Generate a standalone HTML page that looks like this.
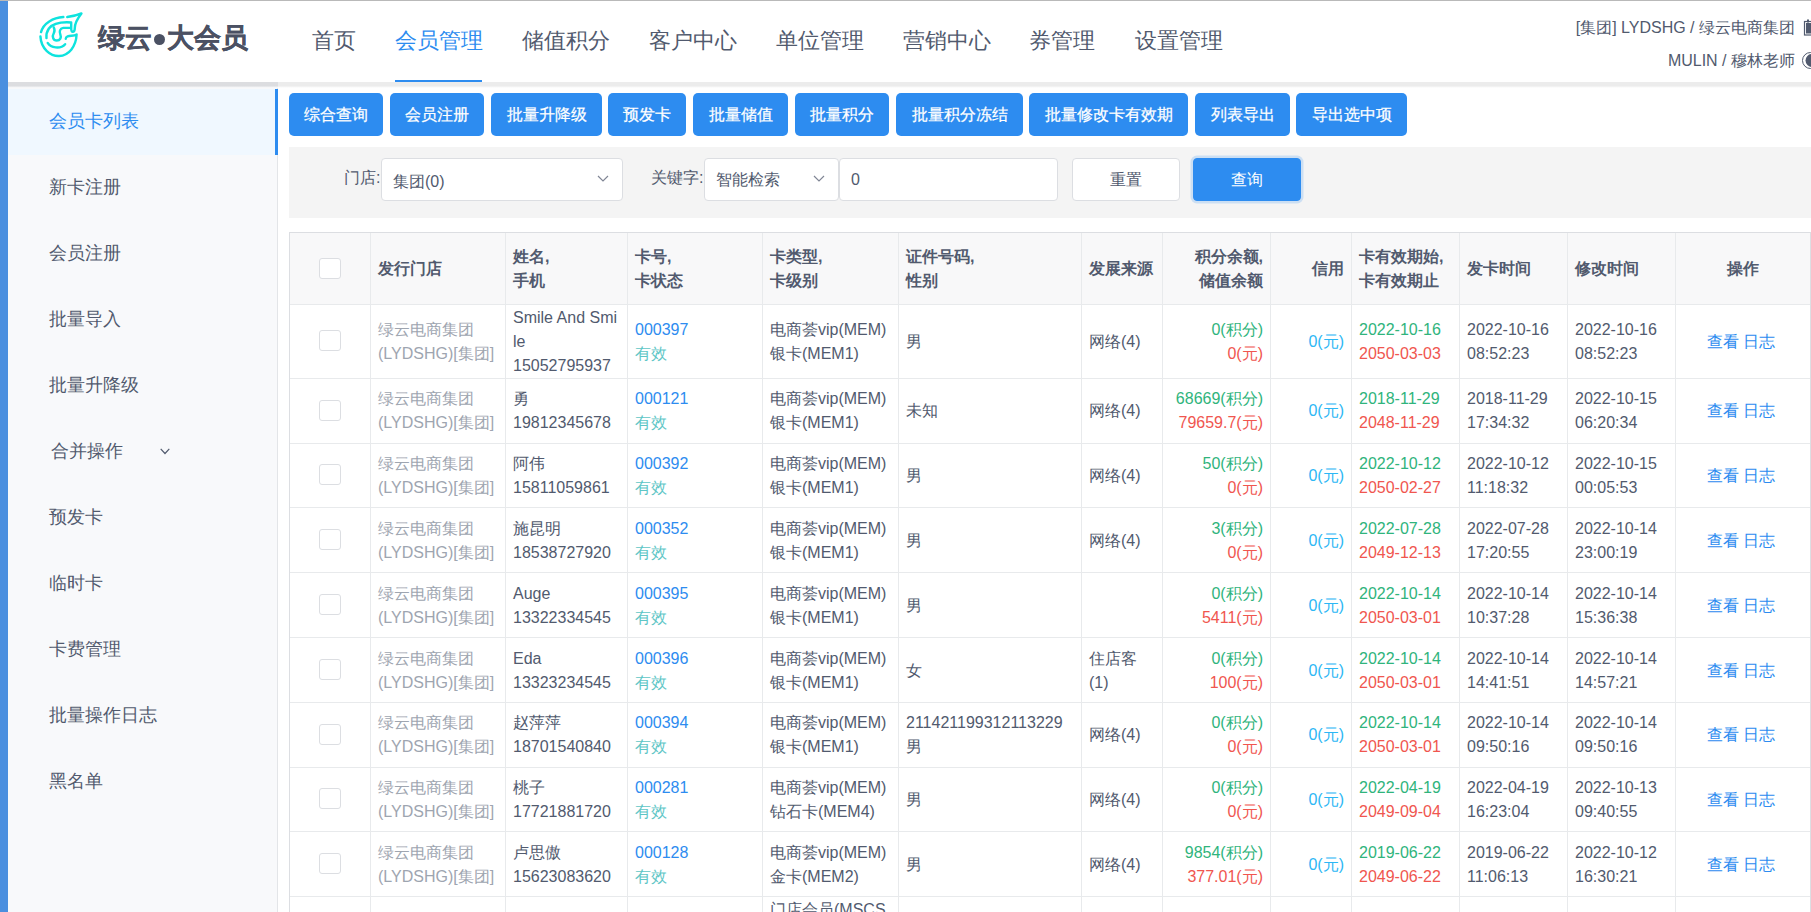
<!DOCTYPE html>
<html><head><meta charset="utf-8">
<style>
*{box-sizing:border-box}
html,body{margin:0;padding:0}
body{width:1811px;height:912px;overflow:hidden;position:relative;background:#fff;font-family:"Liberation Sans",sans-serif;color:#515a6e;font-size:16px}
.abs{position:absolute}
#topline{left:0;top:0;width:1811px;height:1px;background:#b9b9b9}
#lbar{left:0;top:1px;width:8px;height:911px;background:#4a8fdf}
#hshadow{left:8px;top:82px;width:1803px;height:6px;background:linear-gradient(#ececec 0,#ececec 4px,#f8f8f8 5px,#fff 6px);z-index:2}
#hshadow2{left:8px;top:82px;width:270px;height:6px;background:linear-gradient(#dcdde0 0,#dcdde0 4px,#f1f2f4 5px,#fbfbfc 6px);z-index:3}
#side{left:8px;top:86px;width:270px;height:826px;background:#f8f9fb;border-right:1px solid #e3e5e8}
.mi{position:absolute;left:0;width:269px;height:66px;line-height:64px;padding-left:41px;font-size:18px;color:#515a6e}
.mi b{font-weight:normal}
.mi.act{background:#f0f8ff;color:#2d8cf0}
.mi.act:after{content:"";position:absolute;right:-1px;top:0;width:3px;height:66px;background:#2d8cf0}
.nav{position:absolute;top:25px;font-size:22px;line-height:32px;color:#515a6e;white-space:nowrap}
.nav.act{color:#2d8cf0}
#navline{left:395px;top:80px;width:87px;height:2px;background:#2d8cf0}
.btn{position:absolute;top:93px;height:43px;line-height:44px;-webkit-text-stroke:0.25px #fff;background:#2d8cf0;color:#fff;border-radius:5px;text-align:center;font-size:16px;white-space:nowrap}
#filter{left:289px;top:147px;width:1522px;height:71px;background:#f4f4f4}
.lbl{position:absolute;top:166px;font-size:16px;line-height:24px;color:#515a6e;white-space:nowrap}
.sel{position:absolute;top:158px;height:43px;background:#fff;border:1px solid #dcdee2;border-radius:4px;font-size:16px;line-height:41px;color:#515a6e;white-space:nowrap}
.chev{position:absolute;top:16px;width:12px;height:7px}
.c{position:absolute;display:flex;align-items:center;padding:0 7px 0 7px;line-height:24px;font-size:16px;color:#515a6e;white-space:nowrap;overflow:hidden}
.ln{position:absolute}
i.cb{display:block;width:22px;height:21px;border:1px solid #dcdee2;border-radius:3px;background:#fff}
#logo{left:35px;top:8px;width:55px;height:55px}
.logot{top:20px;font-size:27px;line-height:36px;font-weight:bold;color:#4b5163;white-space:nowrap;-webkit-text-stroke:0.3px #4b5163}
.rinfo{position:absolute;right:16px;font-size:16px;line-height:20px;color:#515a6e;white-space:nowrap}
</style></head><body>
<div class="abs" id="topline"></div>
<div class="abs" id="lbar"></div>
<svg class="abs" id="logo" viewBox="0 0 912 912" fill="none" stroke="#0ee3de" stroke-width="40" stroke-linecap="round" stroke-linejoin="round">
<path d="M470,150 C300,160 140,250 100,400"/>
<path d="M90,470 C100,680 260,800 400,795 C560,790 680,640 690,440 C640,470 590,450 540,470 C515,480 510,500 510,510"/>
<path d="M535,150 C620,140 700,120 770,90 C700,180 660,260 660,330 C660,380 640,395 625,395 C600,395 600,360 600,330 L600,240 C450,230 300,250 230,340 C190,400 185,460 190,500"/>
<path d="M310,320 C330,360 330,390 310,420 C280,470 300,540 360,540 C420,540 440,490 420,440 C400,390 410,340 470,330 L590,330"/>
<path d="M210,580 C260,660 420,690 500,600"/>
</svg>
<div class="abs logot" style="left:98px">绿云</div><div class="abs" style="left:153.5px;top:33.8px;width:11.3px;height:11.3px;border-radius:50%;background:#4b5163"></div><div class="abs logot" style="left:167px">大会员</div>
<div class="nav" style="left:312px">首页</div>
<div class="nav act" style="left:395px">会员管理</div>
<div class="nav" style="left:522px">储值积分</div>
<div class="nav" style="left:649px">客户中心</div>
<div class="nav" style="left:776px">单位管理</div>
<div class="nav" style="left:903px">营销中心</div>
<div class="nav" style="left:1029px">券管理</div>
<div class="nav" style="left:1135px">设置管理</div>
<div class="abs" id="navline"></div>
<div class="rinfo" style="top:18px">[集团] LYDSHG / 绿云电商集团</div>
<div class="rinfo" style="top:51px">MULIN / 穆林老师</div>
<svg class="abs" style="left:1803px;top:19px;width:14px;height:17px" viewBox="0 0 14 17"><rect x="1.5" y="2.5" width="14" height="13.5" fill="none" stroke="#515a6e" stroke-width="1.2"/><rect x="3" y="4" width="12" height="10.5" fill="#515a6e"/><rect x="4" y="0.5" width="2" height="3" fill="#515a6e"/></svg>
<svg class="abs" style="left:1802px;top:52px;width:17px;height:17px" viewBox="0 0 17 17"><circle cx="8.5" cy="8.5" r="8" fill="none" stroke="#515a6e" stroke-width="1"/><circle cx="10" cy="8.5" r="6.5" fill="#515a6e"/></svg>
<div class="abs" id="hshadow"></div>
<div class="abs" id="hshadow2"></div>
<div class="abs" id="side">
  <div class="mi act" style="top:3px"><b>会员卡列表</b></div>
  <div class="mi" style="top:69px"><b>新卡注册</b></div>
  <div class="mi" style="top:135px"><b>会员注册</b></div>
  <div class="mi" style="top:201px"><b>批量导入</b></div>
  <div class="mi" style="top:267px"><b>批量升降级</b></div>
  <div class="mi" style="top:333px;padding-left:43px"><b>合并操作</b><svg style="position:absolute;left:152px;top:29px;width:10px;height:7px" viewBox="0 0 10 7"><path d="M0.7,0.9 L5,5.5 L9.3,0.9" fill="none" stroke="#515a6e" stroke-width="1.2"/></svg></div>
  <div class="mi" style="top:399px"><b>预发卡</b></div>
  <div class="mi" style="top:465px"><b>临时卡</b></div>
  <div class="mi" style="top:531px"><b>卡费管理</b></div>
  <div class="mi" style="top:597px"><b>批量操作日志</b></div>
  <div class="mi" style="top:663px"><b>黑名单</b></div>
</div>

<div class="btn" style="left:289px;width:94px">综合查询</div>
<div class="btn" style="left:390px;width:94px">会员注册</div>
<div class="btn" style="left:491px;width:111px">批量升降级</div>
<div class="btn" style="left:608px;width:78px">预发卡</div>
<div class="btn" style="left:693px;width:95px">批量储值</div>
<div class="btn" style="left:795px;width:94px">批量积分</div>
<div class="btn" style="left:896px;width:127px">批量积分冻结</div>
<div class="btn" style="left:1029px;width:159px">批量修改卡有效期</div>
<div class="btn" style="left:1195px;width:95px">列表导出</div>
<div class="btn" style="left:1296px;width:111px">导出选中项</div>

<div class="abs" id="filter"></div>
<div class="lbl" style="left:344px">门店:</div>
<div class="sel" style="left:381px;width:242px;padding-left:11px"><span style="position:relative;top:2px">集团(0)</span><svg class="chev" style="left:215px" viewBox="0 0 12 7"><path d="M1,1 L6,6 L11,1" fill="none" stroke="#808695" stroke-width="1.2"/></svg></div>
<div class="lbl" style="left:651px">关键字:</div>
<div class="sel" style="left:704px;width:135px;padding-left:11px">智能检索<svg class="chev" style="left:108px" viewBox="0 0 12 7"><path d="M1,1 L6,6 L11,1" fill="none" stroke="#808695" stroke-width="1.2"/></svg></div>
<div class="sel" style="left:839px;width:219px;padding-left:11px">0</div>
<div class="sel" style="left:1072px;width:108px;text-align:center">重置</div>
<div class="sel" style="left:1193px;width:108px;text-align:center;background:#2d8cf0;border-color:#2d8cf0;color:#fff;box-shadow:0 0 0 2.5px rgba(45,140,240,.2)">查询</div>

<div class="ln" style="left:289px;top:304px;width:1522px;height:608px;background:#fff"></div>
<div class="ln" style="left:289px;top:232px;width:1522px;height:72px;background:#f8f8f9"></div>
<div class="ln" style="left:370px;top:232px;width:1px;height:680px;background:#e8eaec"></div>
<div class="ln" style="left:505px;top:232px;width:1px;height:680px;background:#e8eaec"></div>
<div class="ln" style="left:627px;top:232px;width:1px;height:680px;background:#e8eaec"></div>
<div class="ln" style="left:762px;top:232px;width:1px;height:680px;background:#e8eaec"></div>
<div class="ln" style="left:898px;top:232px;width:1px;height:680px;background:#e8eaec"></div>
<div class="ln" style="left:1081px;top:232px;width:1px;height:680px;background:#e8eaec"></div>
<div class="ln" style="left:1162px;top:232px;width:1px;height:680px;background:#e8eaec"></div>
<div class="ln" style="left:1270px;top:232px;width:1px;height:680px;background:#e8eaec"></div>
<div class="ln" style="left:1351px;top:232px;width:1px;height:680px;background:#e8eaec"></div>
<div class="ln" style="left:1459px;top:232px;width:1px;height:680px;background:#e8eaec"></div>
<div class="ln" style="left:1567px;top:232px;width:1px;height:680px;background:#e8eaec"></div>
<div class="ln" style="left:1675px;top:232px;width:1px;height:680px;background:#e8eaec"></div>
<div class="ln" style="left:289px;top:304px;width:1522px;height:1px;background:#e8eaec"></div>
<div class="ln" style="left:289px;top:378px;width:1522px;height:1px;background:#e8eaec"></div>
<div class="ln" style="left:289px;top:443px;width:1522px;height:1px;background:#e8eaec"></div>
<div class="ln" style="left:289px;top:507px;width:1522px;height:1px;background:#e8eaec"></div>
<div class="ln" style="left:289px;top:572px;width:1522px;height:1px;background:#e8eaec"></div>
<div class="ln" style="left:289px;top:637px;width:1522px;height:1px;background:#e8eaec"></div>
<div class="ln" style="left:289px;top:702px;width:1522px;height:1px;background:#e8eaec"></div>
<div class="ln" style="left:289px;top:767px;width:1522px;height:1px;background:#e8eaec"></div>
<div class="ln" style="left:289px;top:831px;width:1522px;height:1px;background:#e8eaec"></div>
<div class="ln" style="left:289px;top:896px;width:1522px;height:1px;background:#e8eaec"></div>
<div class="ln" style="left:289px;top:232px;width:1522px;height:1px;background:#dcdee2"></div>
<div class="ln" style="left:289px;top:232px;width:1px;height:680px;background:#dcdee2"></div>
<div class="ln" style="left:1810px;top:232px;width:1px;height:680px;background:#dcdee2"></div>
<div class="c" style="left:290px;top:233px;width:80px;height:71px;justify-content:center;text-align:center;font-weight:bold"><div><i class="cb"></i></div></div>
<div class="c" style="left:371px;top:233px;width:134px;height:71px;justify-content:flex-start;text-align:left;font-weight:bold"><div>发行门店</div></div>
<div class="c" style="left:506px;top:233px;width:121px;height:71px;justify-content:flex-start;text-align:left;font-weight:bold"><div>姓名,<br>手机</div></div>
<div class="c" style="left:628px;top:233px;width:134px;height:71px;justify-content:flex-start;text-align:left;font-weight:bold"><div>卡号,<br>卡状态</div></div>
<div class="c" style="left:763px;top:233px;width:135px;height:71px;justify-content:flex-start;text-align:left;font-weight:bold"><div>卡类型,<br>卡级别</div></div>
<div class="c" style="left:899px;top:233px;width:182px;height:71px;justify-content:flex-start;text-align:left;font-weight:bold"><div>证件号码,<br>性别</div></div>
<div class="c" style="left:1082px;top:233px;width:80px;height:71px;justify-content:flex-start;text-align:left;font-weight:bold"><div>发展来源</div></div>
<div class="c" style="left:1163px;top:233px;width:107px;height:71px;justify-content:flex-end;text-align:right;font-weight:bold"><div>积分余额,<br>储值余额</div></div>
<div class="c" style="left:1271px;top:233px;width:80px;height:71px;justify-content:flex-end;text-align:right;font-weight:bold"><div>信用</div></div>
<div class="c" style="left:1352px;top:233px;width:107px;height:71px;justify-content:flex-start;text-align:left;font-weight:bold"><div>卡有效期始,<br>卡有效期止</div></div>
<div class="c" style="left:1460px;top:233px;width:107px;height:71px;justify-content:flex-start;text-align:left;font-weight:bold"><div>发卡时间</div></div>
<div class="c" style="left:1568px;top:233px;width:107px;height:71px;justify-content:flex-start;text-align:left;font-weight:bold"><div>修改时间</div></div>
<div class="c" style="left:1676px;top:233px;width:134px;height:71px;justify-content:center;text-align:center;font-weight:bold"><div>操作</div></div>
<div class="c" style="left:290px;top:305px;width:80px;height:73px;justify-content:center;text-align:center"><i class="cb" style="position:relative;top:-1px"></i></div>
<div class="c" style="left:371px;top:305px;width:134px;height:73px;justify-content:flex-start;text-align:left"><div style="color:#9ea5b0">绿云电商集团<br>(LYDSHG)[集团]</div></div>
<div class="c" style="left:506px;top:305px;width:121px;height:73px;justify-content:flex-start;text-align:left"><div>Smile And Smi<br>le<br>15052795937</div></div>
<div class="c" style="left:628px;top:305px;width:134px;height:73px;justify-content:flex-start;text-align:left"><div><span style="color:#2d8cf0">000397</span><br><span style="color:#5ec6c6">有效</span></div></div>
<div class="c" style="left:763px;top:305px;width:135px;height:73px;justify-content:flex-start;text-align:left"><div>电商荟vip(MEM)<br>银卡(MEM1)</div></div>
<div class="c" style="left:899px;top:305px;width:182px;height:73px;justify-content:flex-start;text-align:left"><div>男</div></div>
<div class="c" style="left:1082px;top:305px;width:80px;height:73px;justify-content:flex-start;text-align:left"><div>网络(4)</div></div>
<div class="c" style="left:1163px;top:305px;width:107px;height:73px;justify-content:flex-end;text-align:right"><div><span style="color:#2fb47c">0(积分)</span><br><span style="color:#f0564f">0(元)</span></div></div>
<div class="c" style="left:1271px;top:305px;width:80px;height:73px;justify-content:flex-end;text-align:right"><div style="color:#2db7f5">0(元)</div></div>
<div class="c" style="left:1352px;top:305px;width:107px;height:73px;justify-content:flex-start;text-align:left"><div><span style="color:#2fb47c">2022-10-16</span><br><span style="color:#f0564f">2050-03-03</span></div></div>
<div class="c" style="left:1460px;top:305px;width:107px;height:73px;justify-content:flex-start;text-align:left"><div>2022-10-16<br>08:52:23</div></div>
<div class="c" style="left:1568px;top:305px;width:107px;height:73px;justify-content:flex-start;text-align:left"><div>2022-10-16<br>08:52:23</div></div>
<div class="c" style="left:1676px;top:305px;width:134px;height:73px;justify-content:center;text-align:center"><div style="position:relative;left:-2px;color:#2d8cf0">查看<span style="margin-left:4px">日志</span></div></div>
<div class="c" style="left:290px;top:379px;width:80px;height:64px;justify-content:center;text-align:center"><i class="cb" style="position:relative;top:-1px"></i></div>
<div class="c" style="left:371px;top:379px;width:134px;height:64px;justify-content:flex-start;text-align:left"><div style="color:#9ea5b0">绿云电商集团<br>(LYDSHG)[集团]</div></div>
<div class="c" style="left:506px;top:379px;width:121px;height:64px;justify-content:flex-start;text-align:left"><div>勇<br>19812345678</div></div>
<div class="c" style="left:628px;top:379px;width:134px;height:64px;justify-content:flex-start;text-align:left"><div><span style="color:#2d8cf0">000121</span><br><span style="color:#5ec6c6">有效</span></div></div>
<div class="c" style="left:763px;top:379px;width:135px;height:64px;justify-content:flex-start;text-align:left"><div>电商荟vip(MEM)<br>银卡(MEM1)</div></div>
<div class="c" style="left:899px;top:379px;width:182px;height:64px;justify-content:flex-start;text-align:left"><div>未知</div></div>
<div class="c" style="left:1082px;top:379px;width:80px;height:64px;justify-content:flex-start;text-align:left"><div>网络(4)</div></div>
<div class="c" style="left:1163px;top:379px;width:107px;height:64px;justify-content:flex-end;text-align:right"><div><span style="color:#2fb47c">68669(积分)</span><br><span style="color:#f0564f">79659.7(元)</span></div></div>
<div class="c" style="left:1271px;top:379px;width:80px;height:64px;justify-content:flex-end;text-align:right"><div style="color:#2db7f5">0(元)</div></div>
<div class="c" style="left:1352px;top:379px;width:107px;height:64px;justify-content:flex-start;text-align:left"><div><span style="color:#2fb47c">2018-11-29</span><br><span style="color:#f0564f">2048-11-29</span></div></div>
<div class="c" style="left:1460px;top:379px;width:107px;height:64px;justify-content:flex-start;text-align:left"><div>2018-11-29<br>17:34:32</div></div>
<div class="c" style="left:1568px;top:379px;width:107px;height:64px;justify-content:flex-start;text-align:left"><div>2022-10-15<br>06:20:34</div></div>
<div class="c" style="left:1676px;top:379px;width:134px;height:64px;justify-content:center;text-align:center"><div style="position:relative;left:-2px;color:#2d8cf0">查看<span style="margin-left:4px">日志</span></div></div>
<div class="c" style="left:290px;top:444px;width:80px;height:63px;justify-content:center;text-align:center"><i class="cb" style="position:relative;top:-1px"></i></div>
<div class="c" style="left:371px;top:444px;width:134px;height:63px;justify-content:flex-start;text-align:left"><div style="color:#9ea5b0">绿云电商集团<br>(LYDSHG)[集团]</div></div>
<div class="c" style="left:506px;top:444px;width:121px;height:63px;justify-content:flex-start;text-align:left"><div>阿伟<br>15811059861</div></div>
<div class="c" style="left:628px;top:444px;width:134px;height:63px;justify-content:flex-start;text-align:left"><div><span style="color:#2d8cf0">000392</span><br><span style="color:#5ec6c6">有效</span></div></div>
<div class="c" style="left:763px;top:444px;width:135px;height:63px;justify-content:flex-start;text-align:left"><div>电商荟vip(MEM)<br>银卡(MEM1)</div></div>
<div class="c" style="left:899px;top:444px;width:182px;height:63px;justify-content:flex-start;text-align:left"><div>男</div></div>
<div class="c" style="left:1082px;top:444px;width:80px;height:63px;justify-content:flex-start;text-align:left"><div>网络(4)</div></div>
<div class="c" style="left:1163px;top:444px;width:107px;height:63px;justify-content:flex-end;text-align:right"><div><span style="color:#2fb47c">50(积分)</span><br><span style="color:#f0564f">0(元)</span></div></div>
<div class="c" style="left:1271px;top:444px;width:80px;height:63px;justify-content:flex-end;text-align:right"><div style="color:#2db7f5">0(元)</div></div>
<div class="c" style="left:1352px;top:444px;width:107px;height:63px;justify-content:flex-start;text-align:left"><div><span style="color:#2fb47c">2022-10-12</span><br><span style="color:#f0564f">2050-02-27</span></div></div>
<div class="c" style="left:1460px;top:444px;width:107px;height:63px;justify-content:flex-start;text-align:left"><div>2022-10-12<br>11:18:32</div></div>
<div class="c" style="left:1568px;top:444px;width:107px;height:63px;justify-content:flex-start;text-align:left"><div>2022-10-15<br>00:05:53</div></div>
<div class="c" style="left:1676px;top:444px;width:134px;height:63px;justify-content:center;text-align:center"><div style="position:relative;left:-2px;color:#2d8cf0">查看<span style="margin-left:4px">日志</span></div></div>
<div class="c" style="left:290px;top:508px;width:80px;height:64px;justify-content:center;text-align:center;padding-top:2px"><i class="cb" style="position:relative;top:-2px"></i></div>
<div class="c" style="left:371px;top:508px;width:134px;height:64px;justify-content:flex-start;text-align:left;padding-top:2px"><div style="color:#9ea5b0">绿云电商集团<br>(LYDSHG)[集团]</div></div>
<div class="c" style="left:506px;top:508px;width:121px;height:64px;justify-content:flex-start;text-align:left;padding-top:2px"><div>施昆明<br>18538727920</div></div>
<div class="c" style="left:628px;top:508px;width:134px;height:64px;justify-content:flex-start;text-align:left;padding-top:2px"><div><span style="color:#2d8cf0">000352</span><br><span style="color:#5ec6c6">有效</span></div></div>
<div class="c" style="left:763px;top:508px;width:135px;height:64px;justify-content:flex-start;text-align:left;padding-top:2px"><div>电商荟vip(MEM)<br>银卡(MEM1)</div></div>
<div class="c" style="left:899px;top:508px;width:182px;height:64px;justify-content:flex-start;text-align:left;padding-top:2px"><div>男</div></div>
<div class="c" style="left:1082px;top:508px;width:80px;height:64px;justify-content:flex-start;text-align:left;padding-top:2px"><div>网络(4)</div></div>
<div class="c" style="left:1163px;top:508px;width:107px;height:64px;justify-content:flex-end;text-align:right;padding-top:2px"><div><span style="color:#2fb47c">3(积分)</span><br><span style="color:#f0564f">0(元)</span></div></div>
<div class="c" style="left:1271px;top:508px;width:80px;height:64px;justify-content:flex-end;text-align:right;padding-top:2px"><div style="color:#2db7f5">0(元)</div></div>
<div class="c" style="left:1352px;top:508px;width:107px;height:64px;justify-content:flex-start;text-align:left;padding-top:2px"><div><span style="color:#2fb47c">2022-07-28</span><br><span style="color:#f0564f">2049-12-13</span></div></div>
<div class="c" style="left:1460px;top:508px;width:107px;height:64px;justify-content:flex-start;text-align:left;padding-top:2px"><div>2022-07-28<br>17:20:55</div></div>
<div class="c" style="left:1568px;top:508px;width:107px;height:64px;justify-content:flex-start;text-align:left;padding-top:2px"><div>2022-10-14<br>23:00:19</div></div>
<div class="c" style="left:1676px;top:508px;width:134px;height:64px;justify-content:center;text-align:center;padding-top:2px"><div style="position:relative;left:-2px;color:#2d8cf0">查看<span style="margin-left:4px">日志</span></div></div>
<div class="c" style="left:290px;top:573px;width:80px;height:64px;justify-content:center;text-align:center;padding-top:2px"><i class="cb" style="position:relative;top:-2px"></i></div>
<div class="c" style="left:371px;top:573px;width:134px;height:64px;justify-content:flex-start;text-align:left;padding-top:2px"><div style="color:#9ea5b0">绿云电商集团<br>(LYDSHG)[集团]</div></div>
<div class="c" style="left:506px;top:573px;width:121px;height:64px;justify-content:flex-start;text-align:left;padding-top:2px"><div>Auge<br>13322334545</div></div>
<div class="c" style="left:628px;top:573px;width:134px;height:64px;justify-content:flex-start;text-align:left;padding-top:2px"><div><span style="color:#2d8cf0">000395</span><br><span style="color:#5ec6c6">有效</span></div></div>
<div class="c" style="left:763px;top:573px;width:135px;height:64px;justify-content:flex-start;text-align:left;padding-top:2px"><div>电商荟vip(MEM)<br>银卡(MEM1)</div></div>
<div class="c" style="left:899px;top:573px;width:182px;height:64px;justify-content:flex-start;text-align:left;padding-top:2px"><div>男</div></div>
<div class="c" style="left:1082px;top:573px;width:80px;height:64px;justify-content:flex-start;text-align:left;padding-top:2px"><div></div></div>
<div class="c" style="left:1163px;top:573px;width:107px;height:64px;justify-content:flex-end;text-align:right;padding-top:2px"><div><span style="color:#2fb47c">0(积分)</span><br><span style="color:#f0564f">5411(元)</span></div></div>
<div class="c" style="left:1271px;top:573px;width:80px;height:64px;justify-content:flex-end;text-align:right;padding-top:2px"><div style="color:#2db7f5">0(元)</div></div>
<div class="c" style="left:1352px;top:573px;width:107px;height:64px;justify-content:flex-start;text-align:left;padding-top:2px"><div><span style="color:#2fb47c">2022-10-14</span><br><span style="color:#f0564f">2050-03-01</span></div></div>
<div class="c" style="left:1460px;top:573px;width:107px;height:64px;justify-content:flex-start;text-align:left;padding-top:2px"><div>2022-10-14<br>10:37:28</div></div>
<div class="c" style="left:1568px;top:573px;width:107px;height:64px;justify-content:flex-start;text-align:left;padding-top:2px"><div>2022-10-14<br>15:36:38</div></div>
<div class="c" style="left:1676px;top:573px;width:134px;height:64px;justify-content:center;text-align:center;padding-top:2px"><div style="position:relative;left:-2px;color:#2d8cf0">查看<span style="margin-left:4px">日志</span></div></div>
<div class="c" style="left:290px;top:638px;width:80px;height:64px;justify-content:center;text-align:center;padding-top:2px"><i class="cb" style="position:relative;top:-2px"></i></div>
<div class="c" style="left:371px;top:638px;width:134px;height:64px;justify-content:flex-start;text-align:left;padding-top:2px"><div style="color:#9ea5b0">绿云电商集团<br>(LYDSHG)[集团]</div></div>
<div class="c" style="left:506px;top:638px;width:121px;height:64px;justify-content:flex-start;text-align:left;padding-top:2px"><div>Eda<br>13323234545</div></div>
<div class="c" style="left:628px;top:638px;width:134px;height:64px;justify-content:flex-start;text-align:left;padding-top:2px"><div><span style="color:#2d8cf0">000396</span><br><span style="color:#5ec6c6">有效</span></div></div>
<div class="c" style="left:763px;top:638px;width:135px;height:64px;justify-content:flex-start;text-align:left;padding-top:2px"><div>电商荟vip(MEM)<br>银卡(MEM1)</div></div>
<div class="c" style="left:899px;top:638px;width:182px;height:64px;justify-content:flex-start;text-align:left;padding-top:2px"><div>女</div></div>
<div class="c" style="left:1082px;top:638px;width:80px;height:64px;justify-content:flex-start;text-align:left;padding-top:2px"><div>住店客<br>(1)</div></div>
<div class="c" style="left:1163px;top:638px;width:107px;height:64px;justify-content:flex-end;text-align:right;padding-top:2px"><div><span style="color:#2fb47c">0(积分)</span><br><span style="color:#f0564f">100(元)</span></div></div>
<div class="c" style="left:1271px;top:638px;width:80px;height:64px;justify-content:flex-end;text-align:right;padding-top:2px"><div style="color:#2db7f5">0(元)</div></div>
<div class="c" style="left:1352px;top:638px;width:107px;height:64px;justify-content:flex-start;text-align:left;padding-top:2px"><div><span style="color:#2fb47c">2022-10-14</span><br><span style="color:#f0564f">2050-03-01</span></div></div>
<div class="c" style="left:1460px;top:638px;width:107px;height:64px;justify-content:flex-start;text-align:left;padding-top:2px"><div>2022-10-14<br>14:41:51</div></div>
<div class="c" style="left:1568px;top:638px;width:107px;height:64px;justify-content:flex-start;text-align:left;padding-top:2px"><div>2022-10-14<br>14:57:21</div></div>
<div class="c" style="left:1676px;top:638px;width:134px;height:64px;justify-content:center;text-align:center;padding-top:2px"><div style="position:relative;left:-2px;color:#2d8cf0">查看<span style="margin-left:4px">日志</span></div></div>
<div class="c" style="left:290px;top:703px;width:80px;height:64px;justify-content:center;text-align:center"><i class="cb" style="position:relative;top:-1px"></i></div>
<div class="c" style="left:371px;top:703px;width:134px;height:64px;justify-content:flex-start;text-align:left"><div style="color:#9ea5b0">绿云电商集团<br>(LYDSHG)[集团]</div></div>
<div class="c" style="left:506px;top:703px;width:121px;height:64px;justify-content:flex-start;text-align:left"><div>赵萍萍<br>18701540840</div></div>
<div class="c" style="left:628px;top:703px;width:134px;height:64px;justify-content:flex-start;text-align:left"><div><span style="color:#2d8cf0">000394</span><br><span style="color:#5ec6c6">有效</span></div></div>
<div class="c" style="left:763px;top:703px;width:135px;height:64px;justify-content:flex-start;text-align:left"><div>电商荟vip(MEM)<br>银卡(MEM1)</div></div>
<div class="c" style="left:899px;top:703px;width:182px;height:64px;justify-content:flex-start;text-align:left"><div>211421199312113229<br>男</div></div>
<div class="c" style="left:1082px;top:703px;width:80px;height:64px;justify-content:flex-start;text-align:left"><div>网络(4)</div></div>
<div class="c" style="left:1163px;top:703px;width:107px;height:64px;justify-content:flex-end;text-align:right"><div><span style="color:#2fb47c">0(积分)</span><br><span style="color:#f0564f">0(元)</span></div></div>
<div class="c" style="left:1271px;top:703px;width:80px;height:64px;justify-content:flex-end;text-align:right"><div style="color:#2db7f5">0(元)</div></div>
<div class="c" style="left:1352px;top:703px;width:107px;height:64px;justify-content:flex-start;text-align:left"><div><span style="color:#2fb47c">2022-10-14</span><br><span style="color:#f0564f">2050-03-01</span></div></div>
<div class="c" style="left:1460px;top:703px;width:107px;height:64px;justify-content:flex-start;text-align:left"><div>2022-10-14<br>09:50:16</div></div>
<div class="c" style="left:1568px;top:703px;width:107px;height:64px;justify-content:flex-start;text-align:left"><div>2022-10-14<br>09:50:16</div></div>
<div class="c" style="left:1676px;top:703px;width:134px;height:64px;justify-content:center;text-align:center"><div style="position:relative;left:-2px;color:#2d8cf0">查看<span style="margin-left:4px">日志</span></div></div>
<div class="c" style="left:290px;top:768px;width:80px;height:63px;justify-content:center;text-align:center"><i class="cb" style="position:relative;top:-1px"></i></div>
<div class="c" style="left:371px;top:768px;width:134px;height:63px;justify-content:flex-start;text-align:left"><div style="color:#9ea5b0">绿云电商集团<br>(LYDSHG)[集团]</div></div>
<div class="c" style="left:506px;top:768px;width:121px;height:63px;justify-content:flex-start;text-align:left"><div>桃子<br>17721881720</div></div>
<div class="c" style="left:628px;top:768px;width:134px;height:63px;justify-content:flex-start;text-align:left"><div><span style="color:#2d8cf0">000281</span><br><span style="color:#5ec6c6">有效</span></div></div>
<div class="c" style="left:763px;top:768px;width:135px;height:63px;justify-content:flex-start;text-align:left"><div>电商荟vip(MEM)<br>钻石卡(MEM4)</div></div>
<div class="c" style="left:899px;top:768px;width:182px;height:63px;justify-content:flex-start;text-align:left"><div>男</div></div>
<div class="c" style="left:1082px;top:768px;width:80px;height:63px;justify-content:flex-start;text-align:left"><div>网络(4)</div></div>
<div class="c" style="left:1163px;top:768px;width:107px;height:63px;justify-content:flex-end;text-align:right"><div><span style="color:#2fb47c">0(积分)</span><br><span style="color:#f0564f">0(元)</span></div></div>
<div class="c" style="left:1271px;top:768px;width:80px;height:63px;justify-content:flex-end;text-align:right"><div style="color:#2db7f5">0(元)</div></div>
<div class="c" style="left:1352px;top:768px;width:107px;height:63px;justify-content:flex-start;text-align:left"><div><span style="color:#2fb47c">2022-04-19</span><br><span style="color:#f0564f">2049-09-04</span></div></div>
<div class="c" style="left:1460px;top:768px;width:107px;height:63px;justify-content:flex-start;text-align:left"><div>2022-04-19<br>16:23:04</div></div>
<div class="c" style="left:1568px;top:768px;width:107px;height:63px;justify-content:flex-start;text-align:left"><div>2022-10-13<br>09:40:55</div></div>
<div class="c" style="left:1676px;top:768px;width:134px;height:63px;justify-content:center;text-align:center"><div style="position:relative;left:-2px;color:#2d8cf0">查看<span style="margin-left:4px">日志</span></div></div>
<div class="c" style="left:290px;top:832px;width:80px;height:64px;justify-content:center;text-align:center;padding-top:2px"><i class="cb" style="position:relative;top:-2px"></i></div>
<div class="c" style="left:371px;top:832px;width:134px;height:64px;justify-content:flex-start;text-align:left;padding-top:2px"><div style="color:#9ea5b0">绿云电商集团<br>(LYDSHG)[集团]</div></div>
<div class="c" style="left:506px;top:832px;width:121px;height:64px;justify-content:flex-start;text-align:left;padding-top:2px"><div>卢思傲<br>15623083620</div></div>
<div class="c" style="left:628px;top:832px;width:134px;height:64px;justify-content:flex-start;text-align:left;padding-top:2px"><div><span style="color:#2d8cf0">000128</span><br><span style="color:#5ec6c6">有效</span></div></div>
<div class="c" style="left:763px;top:832px;width:135px;height:64px;justify-content:flex-start;text-align:left;padding-top:2px"><div>电商荟vip(MEM)<br>金卡(MEM2)</div></div>
<div class="c" style="left:899px;top:832px;width:182px;height:64px;justify-content:flex-start;text-align:left;padding-top:2px"><div>男</div></div>
<div class="c" style="left:1082px;top:832px;width:80px;height:64px;justify-content:flex-start;text-align:left;padding-top:2px"><div>网络(4)</div></div>
<div class="c" style="left:1163px;top:832px;width:107px;height:64px;justify-content:flex-end;text-align:right;padding-top:2px"><div><span style="color:#2fb47c">9854(积分)</span><br><span style="color:#f0564f">377.01(元)</span></div></div>
<div class="c" style="left:1271px;top:832px;width:80px;height:64px;justify-content:flex-end;text-align:right;padding-top:2px"><div style="color:#2db7f5">0(元)</div></div>
<div class="c" style="left:1352px;top:832px;width:107px;height:64px;justify-content:flex-start;text-align:left;padding-top:2px"><div><span style="color:#2fb47c">2019-06-22</span><br><span style="color:#f0564f">2049-06-22</span></div></div>
<div class="c" style="left:1460px;top:832px;width:107px;height:64px;justify-content:flex-start;text-align:left;padding-top:2px"><div>2019-06-22<br>11:06:13</div></div>
<div class="c" style="left:1568px;top:832px;width:107px;height:64px;justify-content:flex-start;text-align:left;padding-top:2px"><div>2022-10-12<br>16:30:21</div></div>
<div class="c" style="left:1676px;top:832px;width:134px;height:64px;justify-content:center;text-align:center;padding-top:2px"><div style="position:relative;left:-2px;color:#2d8cf0">查看<span style="margin-left:4px">日志</span></div></div>
<div class="c" style="left:763px;top:897px;width:135px;height:64px;align-items:flex-start"><div style="margin-top:1px">门店会员(MSCS</div></div>
</body></html>
